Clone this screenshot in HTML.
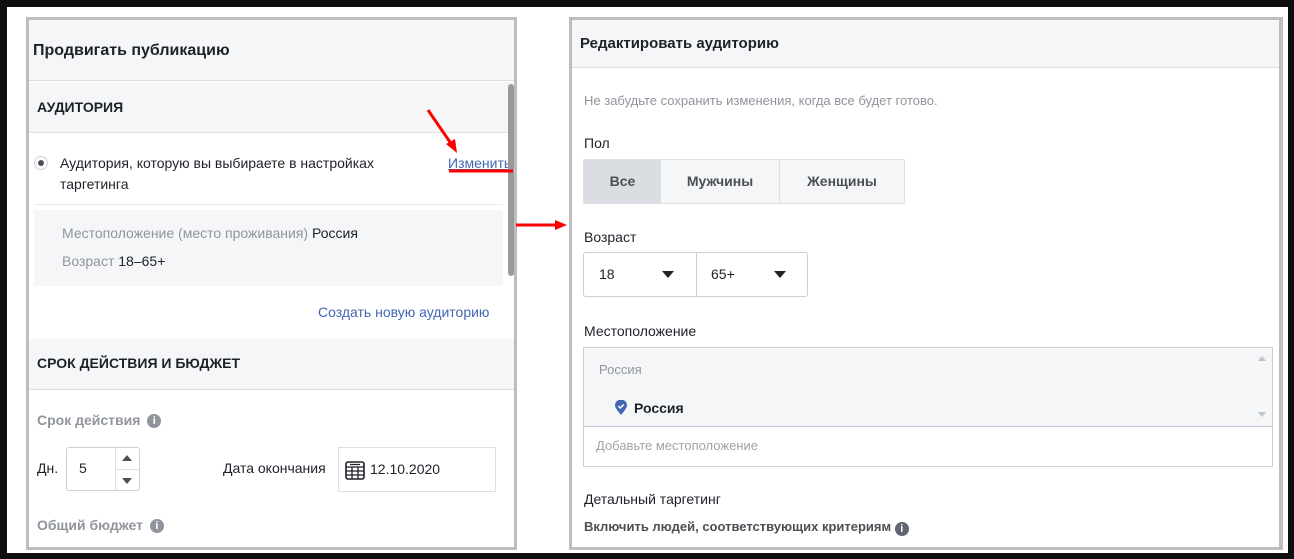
<!DOCTYPE html>
<html><head><meta charset="utf-8"><style>
*{box-sizing:border-box;margin:0;padding:0}
body{width:1294px;height:559px;background:#0e0e0e;position:relative;overflow:hidden;font-family:"Liberation Sans",sans-serif;font-size:14px;color:#1d2129}
.a{position:absolute}
.white{left:7px;top:7px;width:1281px;height:546px;background:#fff}
.panel{border:3px solid #bdbdbd;background:#fff;overflow:hidden}
.grey{color:#90949c}
.b{font-weight:bold}
</style></head><body>
<div class="a white"></div>

<!-- left panel -->
<div class="a panel" style="left:26px;top:17px;width:491px;height:533px">
  <div class="a" style="left:0;top:0;width:485px;height:61px;background:#f5f6f7;border-bottom:1px solid #dddfe2"></div>
  <div class="a b" style="left:4px;top:22px;font-size:16px">Продвигать публикацию</div>
  <div class="a" style="left:0;top:62px;width:485px;height:51px;background:#f5f6f7;border-bottom:1px solid #dddfe2"></div>
  <div class="a b" style="left:8px;top:79px;font-size:14px">АУДИТОРИЯ</div>
  <div class="a" style="left:5px;top:136px;width:14px;height:14px;border:1px solid #ccd0d5;border-radius:50%;background:#fff"><div class="a" style="left:3px;top:3px;width:6px;height:6px;border-radius:50%;background:#4b4f56"></div></div>
  <div class="a" style="left:31px;top:133px;line-height:21px;color:#1d2129">Аудитория, которую вы выбираете в настройках<br>таргетинга</div>
  <div class="a" style="left:419px;top:133px;color:#4267b2;text-decoration:underline;line-height:21px">Изменить</div>
  <div class="a" style="left:5px;top:184px;width:469px;height:1px;background:#e9ebee"></div>
  <div class="a" style="left:5px;top:190px;width:469px;height:76px;background:#f5f6f7"></div>
  <div class="a" style="left:33px;top:205px"><span class="grey">Местоположение (место проживания)</span> Россия</div>
  <div class="a" style="left:33px;top:233px"><span class="grey">Возраст</span> 18–65+</div>
  <div class="a" style="left:289px;top:284px;color:#4267b2">Создать новую аудиторию</div>
  <div class="a" style="left:0;top:319px;width:485px;height:51px;background:#f5f6f7;border-bottom:1px solid #dddfe2"></div>
  <div class="a b" style="left:8px;top:335px">СРОК ДЕЙСТВИЯ И БЮДЖЕТ</div>
  <div class="a b grey" style="left:8px;top:392px">Срок действия <span style="display:inline-block;width:14px;height:14px;border-radius:50%;background:#90949c;color:#fff;font-size:11px;text-align:center;line-height:14px;vertical-align:1px;margin-left:3px">i</span></div>
  <div class="a" style="left:8px;top:440px">Дн.</div>
  <div class="a" style="left:37px;top:427px;width:74px;height:44px;border:1px solid #ccd0d5;border-radius:3px"><span class="a" style="left:12px;top:12px">5</span><div class="a" style="left:48px;top:0;width:1px;height:42px;background:#e0e0e0"></div><div class="a" style="left:49px;top:21px;width:24px;height:1px;background:#e0e0e0"></div><div class="a" style="left:55px;top:7px;border:5px solid transparent;border-bottom:6px solid #4b4f56;border-top:0"></div><div class="a" style="left:55px;top:30px;border:5px solid transparent;border-top:6px solid #4b4f56;border-bottom:0"></div></div>
  <div class="a" style="left:194px;top:440px">Дата окончания</div>
  <div class="a" style="left:309px;top:427px;width:158px;height:45px;border:1px solid #dddfe2"><svg class="a" style="left:6px;top:13px" width="20" height="19" viewBox="0 0 20 19"><rect x="1" y="1" width="18" height="17" rx="2" fill="none" stroke="#1d2129" stroke-width="1.6"/><path d="M1 6h18M7 6v12M13 6v12M1 10h18M1 14h18M5 3.5h10" stroke="#1d2129" stroke-width="1.3" fill="none"/></svg><span class="a" style="left:31px;top:13px">12.10.2020</span></div>
  <div class="a b grey" style="left:8px;top:497px">Общий бюджет <span style="display:inline-block;width:14px;height:14px;border-radius:50%;background:#90949c;color:#fff;font-size:11px;text-align:center;line-height:14px;vertical-align:1px;margin-left:3px">i</span></div>
  <div class="a" style="left:479px;top:64px;width:6px;height:192px;background:#9a9a9a;border-radius:3px"></div>
</div>

<!-- right panel -->
<div class="a panel" style="left:569px;top:17px;width:714px;height:533px;border-right-width:4px">
  <div class="a" style="left:0;top:0;width:710px;height:48px;background:#f5f6f7;border-bottom:1px solid #dddfe2"></div>
  <div class="a b" style="left:8px;top:15px;font-size:15px">Редактировать аудиторию</div>
  <div class="a grey" style="left:12px;top:73px;font-size:13px">Не забудьте сохранить изменения, когда все будет готово.</div>
  <div class="a" style="left:12px;top:115px">Пол</div>
  <div class="a" style="left:11px;top:139px;width:322px;height:45px;border:1px solid #dddfe2;border-radius:2px;background:#f5f6f7;display:flex;font-weight:bold;color:#4b4f56">
    <div style="width:77px;background:#dadde1;text-align:center;line-height:43px">Все</div>
    <div style="width:119px;border-right:1px solid #dddfe2;text-align:center;line-height:43px">Мужчины</div>
    <div style="flex:1;text-align:center;line-height:43px">Женщины</div>
  </div>
  <div class="a" style="left:12px;top:209px">Возраст</div>
  <div class="a" style="left:11px;top:232px;width:225px;height:45px;border:1px solid #ccd0d5;border-radius:3px">
    <span class="a" style="left:15px;top:13px">18</span><div class="a" style="left:78px;top:18px;border:6px solid transparent;border-top:7px solid #1d2129;border-bottom:0"></div>
    <div class="a" style="left:112px;top:0;width:1px;height:43px;background:#ccd0d5"></div>
    <span class="a" style="left:127px;top:13px">65+</span><div class="a" style="left:190px;top:18px;border:6px solid transparent;border-top:7px solid #1d2129;border-bottom:0"></div>
  </div>
  <div class="a" style="left:12px;top:303px">Местоположение</div>
  <div class="a" style="left:11px;top:327px;width:690px;height:120px;border:1px solid #ccd0d5">
    <div class="a" style="left:0;top:0;width:688px;height:78px;background:#f5f6f7"></div>
    <span class="a grey" style="left:15px;top:14px;font-size:13px">Россия</span>
    <svg class="a" style="left:31px;top:52px" width="12" height="15" viewBox="0 0 12 15"><path d="M6 15C2 10 0 7.5 0 5.5A6 6 0 0 1 12 5.5C12 7.5 10 10 6 15Z" fill="#4267b2"/><path d="M3.3 6l2 2 3.5-3.5" stroke="#fff" stroke-width="1.5" fill="none"/></svg>
    <span class="a b" style="left:50px;top:52px">Россия</span>
    <div class="a" style="left:674px;top:8px;border:4px solid transparent;border-bottom:5px solid #bec2c9;border-top:0"></div>
    <div class="a" style="left:674px;top:64px;border:4px solid transparent;border-top:5px solid #bec2c9;border-bottom:0"></div>
    <div class="a" style="left:0;top:78px;width:688px;height:40px;background:#fff;border-top:1px solid #bdc7d8"></div>
    <span class="a" style="left:12px;top:90px;color:#a0a4aa;font-size:13px">Добавьте местоположение</span>
  </div>
  <div class="a" style="left:12px;top:471px">Детальный таргетинг</div>
  <div class="a b" style="left:12px;top:499px;color:#4b4f56;font-size:13px">Включить людей, соответствующих критериям <span style="display:inline-block;width:14px;height:14px;border-radius:50%;background:#606770;color:#fff;font-size:11px;text-align:center;line-height:14px;vertical-align:-1px">i</span></div>
</div>

<!-- red arrows -->
<svg class="a" style="left:0;top:0" width="1294" height="559">
  <path d="M428 110L452 145" stroke="#f00" stroke-width="3"/>
  <path d="M446 144L457 153 455 139Z" fill="#f00"/>
  <path d="M449 171H513" stroke="#f00" stroke-width="3"/>
  <path d="M516 225H556" stroke="#f00" stroke-width="3"/>
  <path d="M555 220L567 225 555 230Z" fill="#f00"/>
</svg>
</body></html>
